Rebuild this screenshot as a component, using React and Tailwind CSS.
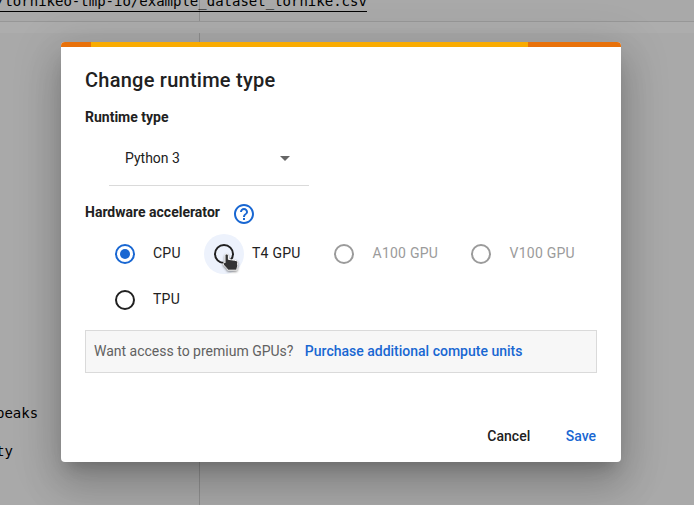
const mono = "font-['DejaVu_Sans_Mono',monospace] text-[14px] leading-[19px] text-black whitespace-pre";

function Radio({ checked, disabled, hovered }) {
  const color = checked ? "border-[#1967d2]" : disabled ? "border-[#9b9b9b]" : "border-[#212121]";
  return (
    <span className={`flex size-10 shrink-0 items-center justify-center rounded-full ${hovered ? "relative bg-[#edf2fc]" : ""}`}>
      <span className={`flex size-5 items-center justify-center rounded-full border-2 ${color}`}>
        {checked && <span className="size-2.5 rounded-full bg-[#1967d2]" />}
      </span>
      {hovered && <HandCursor />}
    </span>
  );
}

function HandCursor() {
  return (
    <svg className="absolute left-[17px] top-[19px] drop-shadow-[0_1px_1px_rgba(0,0,0,0.5)]" width="20" height="20" viewBox="0 0 20 20">
      <path
        d="M5.6 1C6.8 1 7.4 1.8 7.4 2.8V6.4L10.4 6.8L13.5 7.2L15.6 7.8C16.4 8.1 16.7 8.7 16.7 9.5V12.5C16.7 14 15.8 15 15.8 17.2H6.6C6.2 14.9 3.2 13.5 2.3 11.2C1.7 9.7 3.1 9 4 9.9V2.8C4 1.8 4.5 1 5.6 1Z"
        fill="#343434"
        stroke="#fff"
        strokeWidth="1"
      />
    </svg>
  );
}

function Option({ label, className, ...state }) {
  return (
    <label className={`flex h-10 items-center ${className}`}>
      <Radio {...state} />
      <span className={`ml-2 -mt-0.5 whitespace-nowrap text-[14px] tracking-[0.25px] ${state.disabled ? "pl-[0.5px] text-[#9b9b9b]" : "text-[#212121]"}`}>
        {label}
      </span>
    </label>
  );
}

function Notebook() {
  return (
    <div className="flex h-full flex-col">
      <div className="flex h-[22px] border-b border-[#979797] bg-[#a9a9a9]">
        <div className="h-full w-[200px] shrink-0 border-r border-[#8f8f8f]">
          <div className={`${mono} -ml-1 -mt-2 w-[371px] border-b border-black`}>/tornikeo-tmp-io/example_dataset_tornike.csv</div>
        </div>
      </div>
      <div className="h-[11px] bg-[#adadad]" />
      <div className="flex flex-1 bg-[#a9a9a9]">
        <div className="w-[200px] border-r border-[#8f8f8f] pt-[371px]">
          <div className={`${mono} -ml-1`}>peaks</div>
          <div className={`${mono} -ml-1 mt-[19px]`}>ty</div>
        </div>
      </div>
    </div>
  );
}

function Dialog() {
  return (
    <div className="absolute left-[61px] top-[42px] flex h-[420px] w-[560px] flex-col overflow-hidden rounded-[4px] bg-white shadow-[0_11px_15px_-7px_rgba(0,0,0,0.2),0_24px_38px_3px_rgba(0,0,0,0.14),0_9px_46px_8px_rgba(0,0,0,0.12)]">
      <div className="flex h-[5px] shrink-0 bg-[#e8710a]">
        <div className="ml-[30px] w-[437px] bg-[#f9ab00]" />
      </div>
      <div className="flex flex-1 flex-col px-6">
        <h2 className="mt-[17px] text-[20px] font-medium leading-8 tracking-[0.25px]">Change runtime type</h2>
        <h3 className="mt-[11px] text-[14px] font-bold leading-5">Runtime type</h3>
        <div className="ml-6 mt-1 flex h-[55px] w-[200px] items-center justify-between border-b border-[#dadada] pl-4 pr-[19px]">
          <span className="text-[14px] leading-5">Python 3</span>
          <span className="border-x-5 border-t-5 border-x-transparent border-t-[#666]" />
        </div>
        <div className="mt-4 flex h-6 items-center">
          <h3 className="-mt-1 text-[14px] font-bold leading-5">Hardware accelerator</h3>
          <svg className="ml-3" width="24" height="24" viewBox="0 0 24 24" fill="#1967d2">
            <path d="M11 18h2v-2h-2v2zm1-16C6.48 2 2 6.48 2 12s4.48 10 10 10 10-4.48 10-10S17.52 2 12 2zm0 18c-4.41 0-8-3.59-8-8s3.59-8 8-8 8 3.59 8 8-3.59 8-8 8zm0-14c-2.21 0-4 1.79-4 4h2c0-1.1.9-2 2-2s2 .9 2 2c0 2-3 1.75-3 5h2c0-2.25 3-2.5 3-5 0-2.21-1.79-4-4-4z" />
          </svg>
        </div>
        <div className="ml-5 mt-2 flex">
          <Option className="w-[99px]" label="CPU" checked />
          <Option className="w-[120px]" label="T4 GPU" hovered />
          <Option className="w-[137px]" label="A100 GPU" disabled />
          <Option className="" label="V100 GPU" disabled />
        </div>
        <Option className="ml-5 mt-1.5" label="TPU" />
        <div className="mt-[10px] flex h-[43px] shrink-0 items-center border border-[#dadada] bg-[#f7f7f7] px-2 text-[14px]">
          <span className="text-[#616161]">Want access to premium GPUs?</span>
          <a className="ml-[11.4px] font-medium text-[#1967d2]">Purchase additional compute units</a>
        </div>
        <div className="mt-[53px] flex justify-end gap-[35.5px] text-[14px] font-medium leading-5">
          <button>Cancel</button>
          <button className="pr-px text-[#1967d2]">Save</button>
        </div>
      </div>
    </div>
  );
}

export default function App() {
  return (
    <main className="relative h-[505px] w-[694px] overflow-hidden font-[Roboto,sans-serif] text-[#212121]">
      <Notebook />
      <Dialog />
    </main>
  );
}
